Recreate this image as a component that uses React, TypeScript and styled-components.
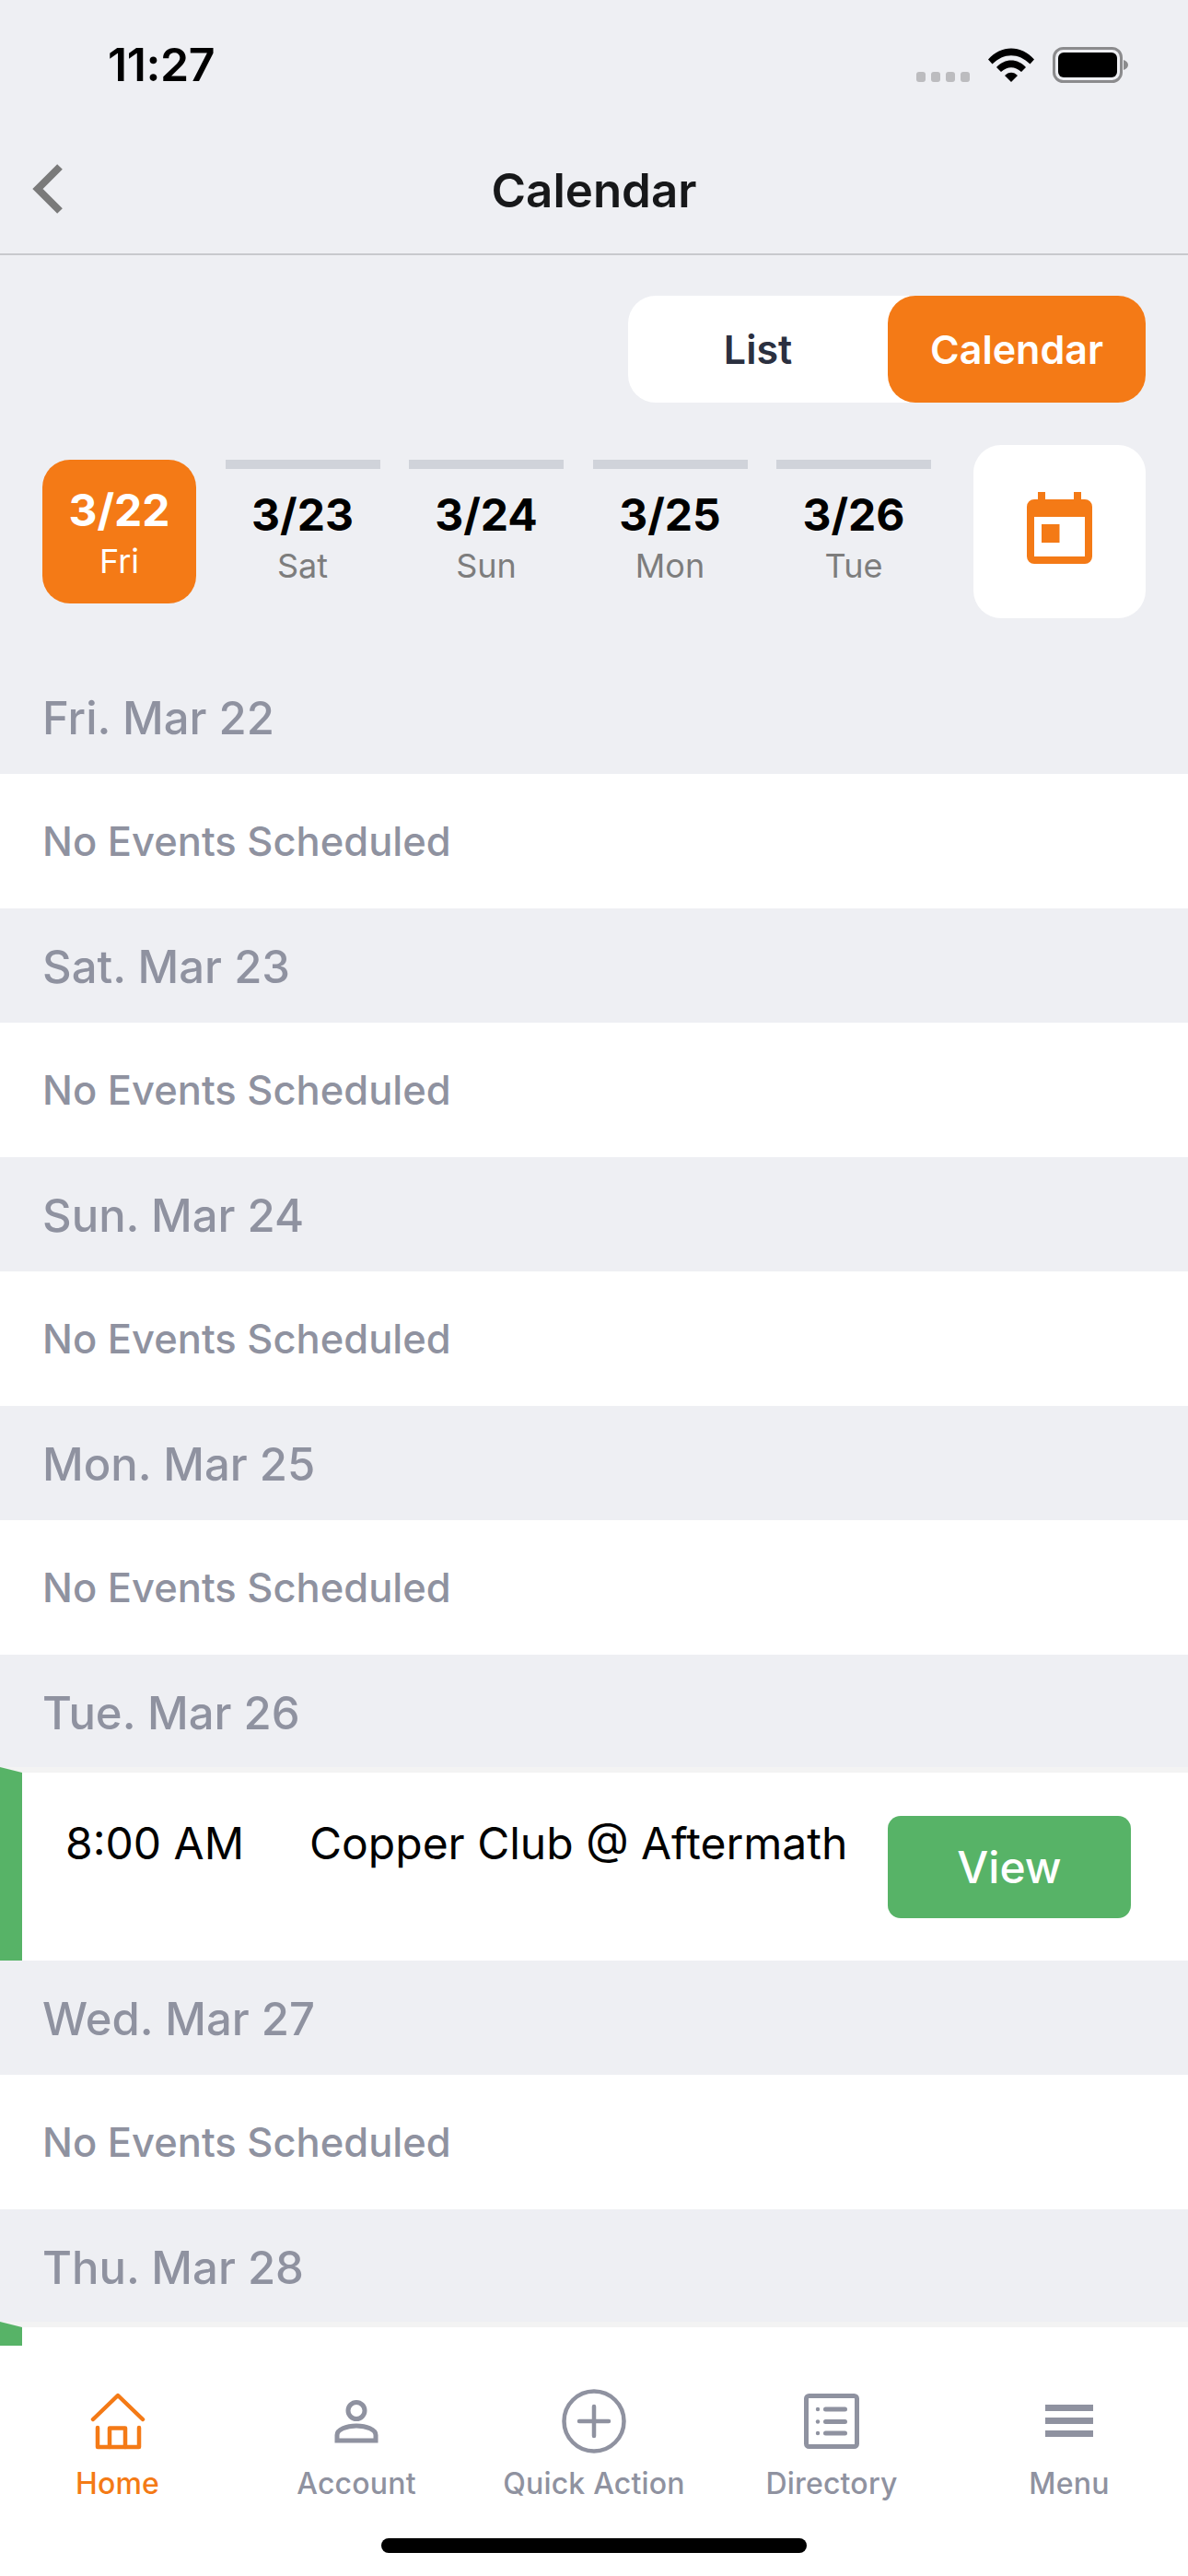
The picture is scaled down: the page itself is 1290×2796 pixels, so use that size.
import React from "react";
import styled, { createGlobalStyle } from "styled-components";

const Global = createGlobalStyle`
  html, body { margin: 0; padding: 0; background: #eeeff3; }
  * { box-sizing: border-box; }
`;

const FONT = `Inter, "Liberation Sans", sans-serif`;
const ORANGE = "#f47a16";
const GREEN = "#57b367";
const SLATE = "#8f92a0";

const Phone = styled.div`
  width: 1290px;
  height: 2796px;
  display: flex;
  flex-direction: column;
  overflow: hidden;
  background: #eeeff3;
  font-family: ${FONT};
`;

const StatusBar = styled.div`
  height: 140px;
  flex: none;
  display: flex;
  align-items: center;
  justify-content: space-between;
  padding: 0 65px 0 117px;
`;

const Clock = styled.span`
  font-size: 50px;
  font-weight: 600;
  color: #000;
  letter-spacing: -0.4px;
`;

const StatusIcons = styled.div`
  display: flex;
  align-items: center;
  gap: 20px;
`;

const SignalDots = styled.svg`
  margin-top: 28px;
`;

const NavBar = styled.header`
  height: 137px;
  flex: none;
  display: flex;
  align-items: center;
  justify-content: center;
  position: relative;
  border-bottom: 2px solid #c8c9cd;
  padding-bottom: 3px;
`;

const BackButton = styled.svg`
  position: absolute;
  left: 34px;
  top: 38px;
`;

const Title = styled.h1`
  margin: 0;
  font-size: 51px;
  font-weight: 600;
  color: #17181a;
`;

const ToggleRow = styled.div`
  flex: none;
  display: flex;
  justify-content: flex-end;
  padding: 44px 46px 0 0;
`;

const Toggle = styled.div`
  width: 562px;
  height: 116px;
  display: flex;
  justify-content: space-between;
  background: #fff;
  border-radius: 30px;
`;

const ToggleOption = styled.div<{ $active?: boolean }>`
  width: ${(p) => (p.$active ? "280px" : "282px")};
  display: flex;
  align-items: center;
  justify-content: center;
  font-size: 43px;
  font-weight: 600;
  border-radius: 30px;
  color: ${(p) => (p.$active ? "#fff" : "#2b3040")};
  background: ${(p) => (p.$active ? ORANGE : "transparent")};
`;

const DateStrip = styled.div`
  flex: none;
  display: flex;
  align-items: flex-start;
  padding: 46px 46px 0 46px;
`;

const DateTabs = styled.div`
  display: flex;
  gap: 31.5px;
  padding-top: 16px;
  flex: 1;
`;

const DateTab = styled.div<{ $active?: boolean }>`
  width: ${(p) => (p.$active ? "167px" : "168px")};
  height: 156px;
  display: flex;
  flex-direction: column;
  align-items: center;
  border-radius: ${(p) => (p.$active ? "30px" : "0")};
  background: ${(p) => (p.$active ? ORANGE : "transparent")};
  border-top: ${(p) => (p.$active ? "none" : "10px solid #d0d3da")};
  padding-top: ${(p) => (p.$active ? "25px" : "20px")};
`;

const DateNum = styled.span<{ $active?: boolean }>`
  font-size: 48px;
  font-weight: 700;
  line-height: 60px;
  color: ${(p) => (p.$active ? "#fff" : "#000")};
`;

const DateDay = styled.span<{ $active?: boolean }>`
  font-size: 36px;
  font-weight: 400;
  line-height: 44px;
  margin-top: 3px;
  color: ${(p) => (p.$active ? "#fff" : "#7d7d7d")};
`;

const CalendarButton = styled.div`
  width: 187px;
  height: 188px;
  flex: none;
  background: #fff;
  border-radius: 30px;
  display: flex;
  align-items: center;
  justify-content: center;
`;

const EventGlyph = styled.svg`
  margin-bottom: 8px;
`;

const Schedule = styled.main`
  flex: 1;
  min-height: 0;
  overflow: hidden;
  padding-top: 45px;
`;

const DayHeader = styled.div`
  height: 124px;
  padding: 2px 46px 0;
  display: flex;
  align-items: center;
  font-size: 49px;
  font-weight: 500;
  color: ${SLATE};
`;

const EmptyRow = styled.div`
  height: 146px;
  padding: 0 46px;
  display: flex;
  align-items: center;
  background: #fff;
  font-size: 43.5px;
  font-weight: 500;
  color: ${SLATE};
`;

const EventRow = styled.div`
  height: 210px;
  display: flex;
  align-items: flex-start;
  background: #fff;
  border-left: 24px solid ${GREEN};
  border-top: 6px solid #f3f3f3;
  padding: 47px 62px 0 47px;
  margin-top: -2px;
`;

const EventTime = styled.span`
  width: 265px;
  flex: none;
  font-size: 48px;
  line-height: 60px;
  color: #000;
`;

const EventName = styled.span`
  flex: 1;
  font-size: 48px;
  line-height: 60px;
  color: #000;
  white-space: nowrap;
`;

const ViewButton = styled.div`
  width: 264px;
  height: 111px;
  flex: none;
  background: ${GREEN};
  border-radius: 14px;
  display: flex;
  align-items: center;
  justify-content: center;
  color: #fff;
  font-size: 48px;
  font-weight: 500;
`;

const TabBar = styled.nav`
  height: 250px;
  flex: none;
  background: #fff;
  display: flex;
  flex-direction: column;
  align-items: stretch;
`;

const Tabs = styled.div`
  display: grid;
  grid-template-columns: repeat(5, 1fr);
  padding-top: 42px;
`;

const TabItem = styled.div<{ $active?: boolean }>`
  display: flex;
  flex-direction: column;
  align-items: center;
  padding-right: ${(p) => (p.$active ? "3px" : "0")};
  color: ${(p) => (p.$active ? ORANGE : SLATE)};
`;

const TabIcon = styled.div`
  height: 80px;
  display: flex;
  align-items: center;
  justify-content: center;
`;

const TabLabel = styled.span`
  margin-top: 8px;
  font-size: 32px;
  line-height: 40px;
  font-weight: 500;
  letter-spacing: 0.2px;
  white-space: nowrap;
`;

const HomeIndicator = styled.div`
  width: 462px;
  height: 16px;
  margin: 39px auto 0;
  border-radius: 8px;
  background: #000;
`;

const days = ["Sat", "Sun", "Mon", "Tue"];
const dates = ["3/23", "3/24", "3/25", "3/26"];

const Signal = () => (
  <SignalDots width="58" height="12" viewBox="0 0 58 12">
    {[0, 16, 32, 48].map((x) => (
      <rect key={x} x={x} y="0" width="10" height="11" rx="3" fill="#bcbcbf" />
    ))}
  </SignalDots>
);

const Wifi = () => (
  <svg width="50" height="37" viewBox="0 0 50 37">
    <path d="M0 12.5 C14-3.5 36-3.5 50 12.5 L45.5 17.5 C33 5 17 5 4.5 17.5 Z" fill="#000" />
    <path d="M9 21 C18 11 32 11 41 21 L36 26 C29 19.5 21 19.5 14 26 Z" fill="#000" />
    <path d="M18 30 C22 25.5 28 25.5 32 30 L25 37 Z" fill="#000" />
  </svg>
);

const Battery = () => (
  <svg width="82" height="39" viewBox="0 0 82 39">
    <rect x="1.5" y="1.5" width="73" height="36" rx="10" fill="none" stroke="#8b8b8d" strokeWidth="3" />
    <rect x="6" y="6" width="64" height="27" rx="6" fill="#000" />
    <path d="M77 14 C80 15 82 17 82 19.5 C82 22 80 24 77 25 Z" fill="#8b8b8d" />
  </svg>
);

const EventIcon = () => (
  <EventGlyph width="71" height="78" viewBox="0 0 71 78" fill={ORANGE}>
    <path d="M12 0h8v8h31V0h8v8h4a8 8 0 0 1 8 8v54a8 8 0 0 1-8 8H8a8 8 0 0 1-8-8V16a8 8 0 0 1 8-8h4z M8 27v43h55V27z" fillRule="evenodd" />
    <rect x="16" y="35" width="19.5" height="20" />
  </EventGlyph>
);

const HomeIcon = () => (
  <svg width="60" height="62" viewBox="0 0 60 62" fill="none" stroke="currentColor" strokeWidth="4.5" strokeLinecap="round" strokeLinejoin="round">
    <path d="M3 29 L30 3 L57 29" />
    <path d="M8 38 V59 H53 V38" />
    <path d="M21 59 V38.5 H38 V59" />
  </svg>
);

const PersonIcon = () => (
  <svg width="48" height="48" viewBox="0 0 48 48" fill="none" stroke="currentColor" strokeWidth="5">
    <ellipse cx="24" cy="12.5" rx="9" ry="9" />
    <path d="M3 45 V39 C3 33 13 29 24 29 C35 29 45 33 45 39 V45 Z" />
  </svg>
);

const PlusIcon = () => (
  <svg width="70" height="70" viewBox="0 0 70 70" fill="none" stroke="currentColor" strokeLinecap="round">
    <circle cx="35" cy="35" r="32.5" strokeWidth="4.5" />
    <path d="M35 19 V51 M19 35 H51" strokeWidth="4.5" />
  </svg>
);

const DirectoryIcon = () => (
  <svg width="60" height="60" viewBox="0 0 60 60" fill="none" stroke="currentColor" strokeLinecap="round">
    <rect x="2.5" y="2.5" width="55" height="55" rx="3" strokeWidth="5" />
    <path d="M23.5 17 H44.5 M23.5 30.5 H44.5 M23.5 43 H44.5" strokeWidth="5" />
    <circle cx="15" cy="17" r="2.2" fill="currentColor" stroke="none" />
    <circle cx="15" cy="30.5" r="2.2" fill="currentColor" stroke="none" />
    <circle cx="15" cy="43" r="2.2" fill="currentColor" stroke="none" />
  </svg>
);

const MenuIcon = () => (
  <svg width="52" height="36" viewBox="0 0 52 36" fill="currentColor">
    <rect y="0" width="52" height="7" />
    <rect y="14" width="52" height="7" />
    <rect y="28" width="52" height="7" />
  </svg>
);

const emptyDays = ["Fri. Mar 22", "Sat. Mar 23", "Sun. Mar 24", "Mon. Mar 25"];

const tabs = [
  { label: "Home", icon: <HomeIcon />, active: true },
  { label: "Account", icon: <PersonIcon /> },
  { label: "Quick Action", icon: <PlusIcon /> },
  { label: "Directory", icon: <DirectoryIcon /> },
  { label: "Menu", icon: <MenuIcon /> },
];

export default function App() {
  return (
    <Phone>
      <Global />
      <StatusBar>
        <Clock>11:27</Clock>
        <StatusIcons>
          <Signal />
          <Wifi />
          <Battery />
        </StatusIcons>
      </StatusBar>
      <NavBar>
        <BackButton width="34" height="54" viewBox="0 0 34 54" fill="none" stroke="#7a7a7a" strokeWidth="8">
          <path d="M31 3 L7 27 L31 51" />
        </BackButton>
        <Title>Calendar</Title>
      </NavBar>
      <ToggleRow>
        <Toggle>
          <ToggleOption>List</ToggleOption>
          <ToggleOption $active>Calendar</ToggleOption>
        </Toggle>
      </ToggleRow>
      <DateStrip>
        <DateTabs>
          <DateTab $active>
            <DateNum $active>3/22</DateNum>
            <DateDay $active>Fri</DateDay>
          </DateTab>
          {dates.map((d, i) => (
            <DateTab key={d}>
              <DateNum>{d}</DateNum>
              <DateDay>{days[i]}</DateDay>
            </DateTab>
          ))}
        </DateTabs>
        <CalendarButton>
          <EventIcon />
        </CalendarButton>
      </DateStrip>
      <Schedule>
        {emptyDays.map((d) => (
          <React.Fragment key={d}>
            <DayHeader>{d}</DayHeader>
            <EmptyRow>No Events Scheduled</EmptyRow>
          </React.Fragment>
        ))}
        <DayHeader>Tue. Mar 26</DayHeader>
        <EventRow>
          <EventTime>8:00 AM</EventTime>
          <EventName>Copper Club @ Aftermath</EventName>
          <ViewButton>View</ViewButton>
        </EventRow>
        <DayHeader>Wed. Mar 27</DayHeader>
        <EmptyRow>No Events Scheduled</EmptyRow>
        <DayHeader>Thu. Mar 28</DayHeader>
        <EventRow />
      </Schedule>
      <TabBar>
        <Tabs>
          {tabs.map((t) => (
            <TabItem key={t.label} $active={t.active}>
              <TabIcon>{t.icon}</TabIcon>
              <TabLabel>{t.label}</TabLabel>
            </TabItem>
          ))}
        </Tabs>
        <HomeIndicator />
      </TabBar>
    </Phone>
  );
}
